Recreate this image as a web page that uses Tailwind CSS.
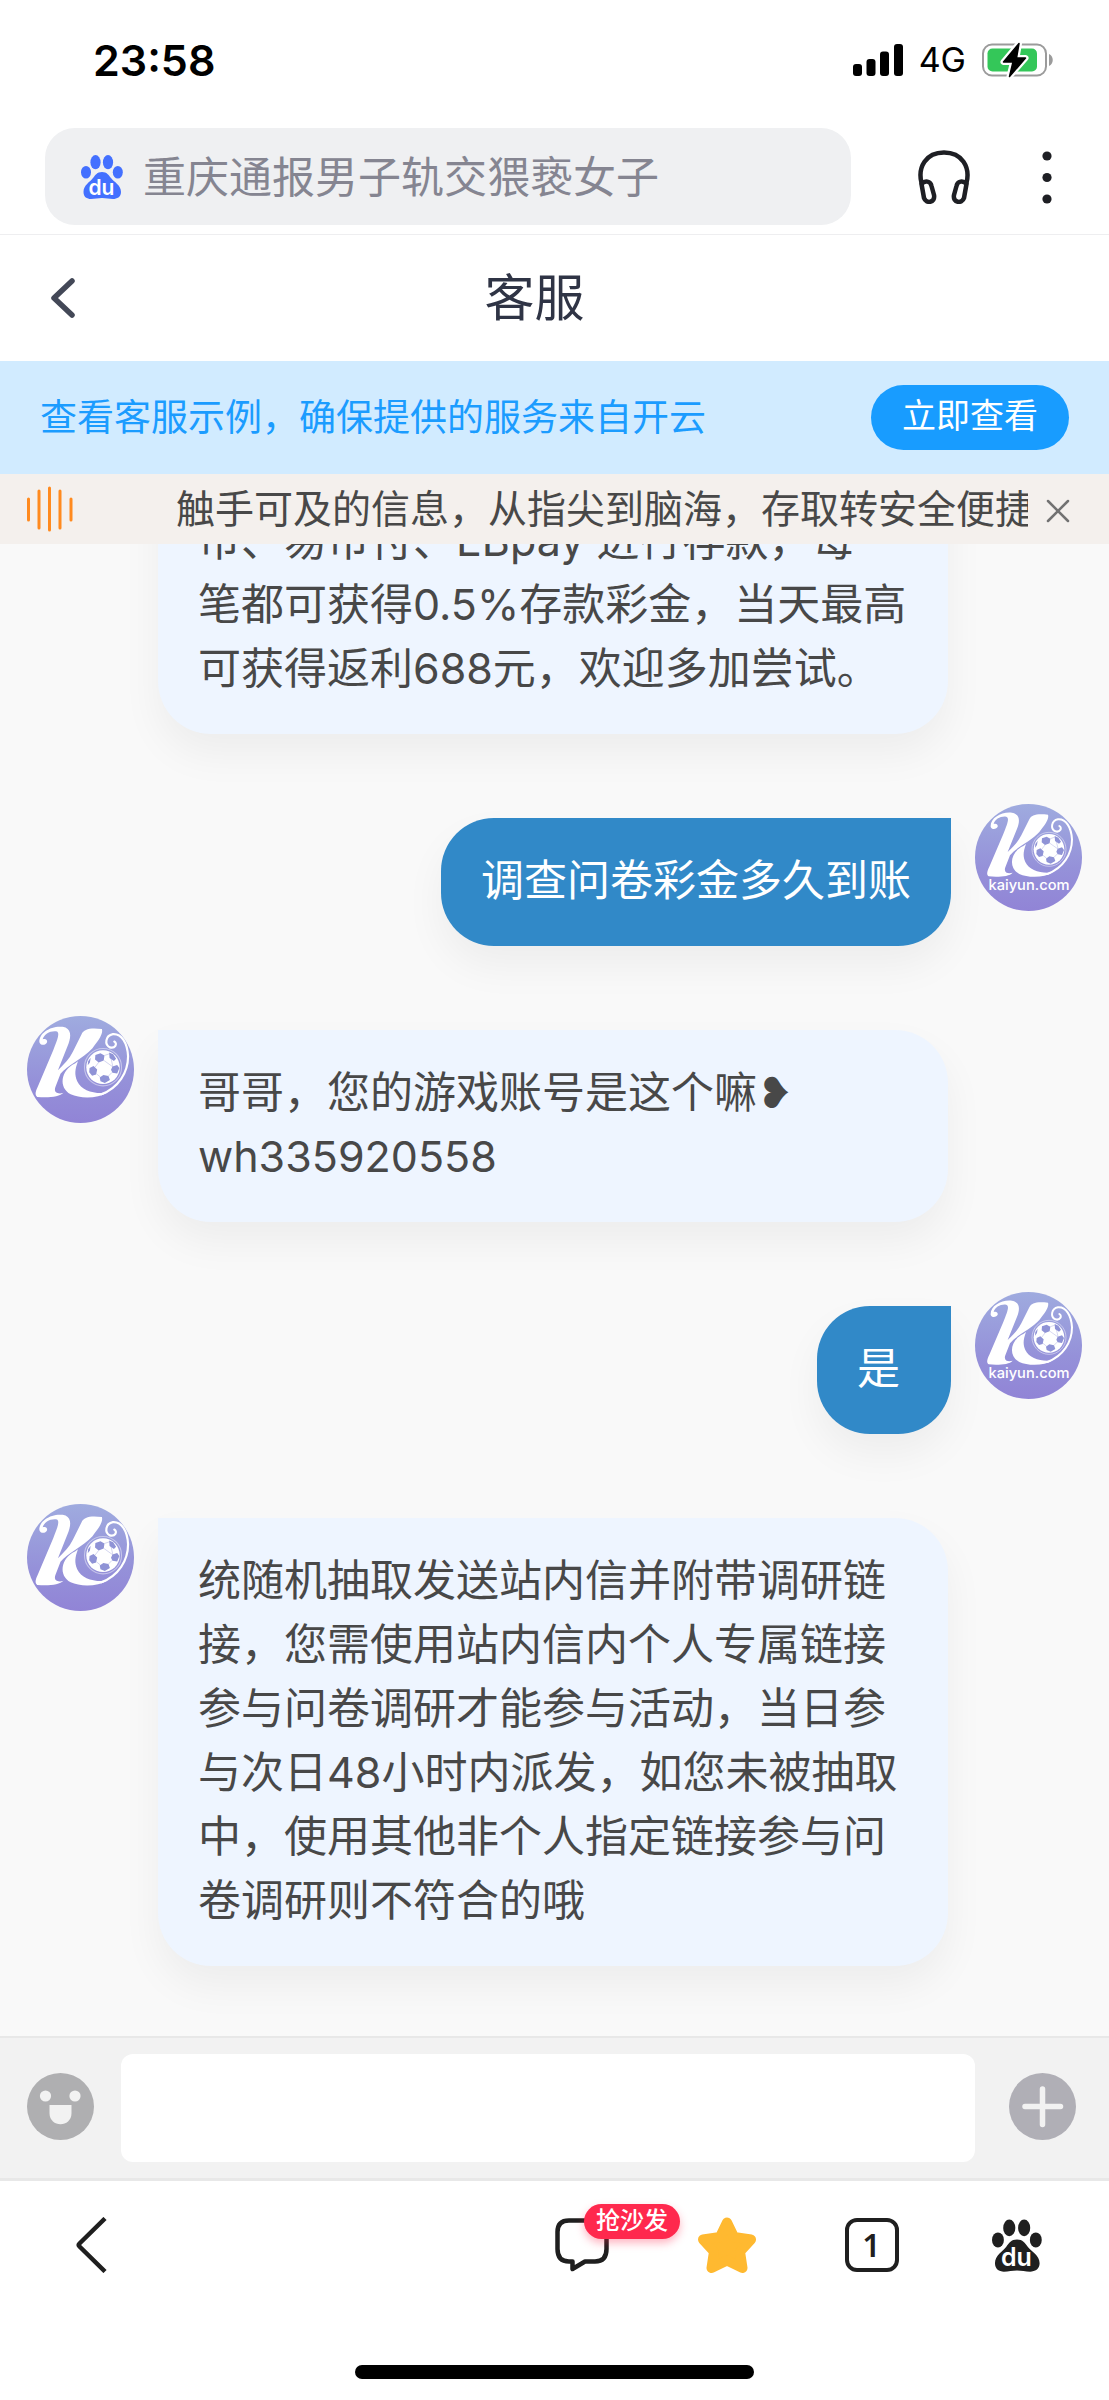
<!DOCTYPE html>
<html lang="zh-CN">
<head>
<meta charset="utf-8">
<meta name="viewport" content="width=device-width, initial-scale=1">
<title>客服</title>
<script src="https://cdn.jsdelivr.net/npm/@tailwindcss/browser@4"></script>
</head>
<body class="h-screen flex flex-col bg-white overflow-hidden font-[Inter,'Noto_Sans_CJK_SC',sans-serif] text-[#484848]">

<svg class="absolute w-0 h-0" aria-hidden="true">
  <defs>
    <linearGradient id="disc" x1="0" y1="0" x2="0" y2="1">
      <stop offset="0" stop-color="#9fabdf"/>
      <stop offset="0.6" stop-color="#9591d9"/>
      <stop offset="1" stop-color="#9184d6"/>
    </linearGradient>
    <g id="kmark">
      <path fill="#fff" d="M92 108C90 82 125 62 156 66C180 70 180 92 172 112L143 184C160 168 174 154 184 134L208 86C214 72 232 68 264 72C268 84 256 102 238 124C212 152 166 172 150 194L136 230C130 246 144 250 158 246C148 258 112 260 86 257C78 252 82 240 88 228L130 130C142 100 150 80 138 78C122 76 104 86 101 100C110 96 116 104 112 110C106 118 94 116 92 108Z"/>
      <path fill="#fff" d="M190 166C150 184 144 232 178 250C204 262 252 262 280 245C244 250 208 240 196 214C188 196 190 182 198 160Z"/>
      <path fill="none" stroke="#fff" stroke-width="6" stroke-linecap="round" d="M262 250C310 232 336 190 336 146C334 110 318 84 294 86C274 90 270 114 286 122C300 126 308 112 298 106"/>
      <circle cx="267" cy="176" r="51" fill="none" stroke="#fff" stroke-opacity=".45" stroke-width="3"/>
      <circle cx="267" cy="176" r="46" fill="#fff"/>
      <g fill="#8f93d6">
        <path d="M246 143l14-5 11 6-2 14-14 5-10-8zM284 136l11 5 8 12-6 6-12-8zM293 174l13-4 6 8-6 15-13-2-4-8zM268 197l14 3 4 11-14 8-12-5-2-10zM230 178l11-5 10 9-3 14-11 3-8-9zM226 160l7-10-2 13-6 8z"/>
      </g>
      <g fill="none" stroke="#8f93d6" stroke-width="1.500" stroke-opacity=".7">
        <path d="M255 163l-10 13M270 158l24 17M271 144l15-5M249 194l11 9M282 200l10-10M289 152l5 22"/>
      </g>
    </g>
    <symbol id="avatar-user" viewBox="45 40 321 321">
      <circle cx="205.500" cy="200.500" r="160.500" fill="url(#disc)"/>
      <use href="#kmark"/>
      <text x="207" y="297" text-anchor="middle" font-family="Inter" font-weight="500" font-size="44" fill="#fff">kaiyun.com</text>
    </symbol>
    <symbol id="avatar-agent" viewBox="45 40 321 321">
      <circle cx="205.500" cy="200.500" r="160.500" fill="url(#disc)"/>
      <use href="#kmark" transform="matrix(1.09 0 0 1.1 -18 0)"/>
    </symbol>
    <symbol id="paw" viewBox="0 0 42 44">
      <g fill="currentColor">
        <ellipse cx="5" cy="17.300" rx="5" ry="6.300"/>
        <ellipse cx="14.500" cy="7.200" rx="5.100" ry="7.100"/>
        <ellipse cx="27" cy="7.200" rx="5.100" ry="7.100"/>
        <ellipse cx="36.800" cy="17.300" rx="5" ry="6.300"/>
        <path d="M21 17C16 17 14.500 20 12 23C9 27 2.500 30 2.500 37C2.500 42 6 44 10 44C14 44 17 43 21 43C25 43 28 44 32 44C36 44 40 42 40 37C40 30 33 27 30 23C27.500 20 26 17 21 17Z"/>
      </g>
      <text x="20.500" y="39.500" text-anchor="middle" font-family="Inter" font-weight="600" font-size="21" fill="#fff">du</text>
    </symbol>
  </defs>
</svg>

<!-- Status bar -->
<div class="shrink-0 h-32 pl-[93px] pr-14 flex items-center justify-between text-black">
  <time class="text-[43px] leading-none font-semibold -mt-2">23:58</time>
  <div class="flex items-center gap-4 -mt-2">
    <svg class="w-[50px] h-8" viewBox="0 0 50 32" fill="#000" aria-label="信号">
      <rect x="0" y="20" width="9" height="12" rx="3"/><rect x="13.500" y="15" width="9" height="17" rx="3"/><rect x="27" y="7.500" width="9" height="24.500" rx="3"/><rect x="41" y="0" width="9" height="32" rx="3"/>
    </svg>
    <span class="text-[34px] leading-none">4G</span>
    <svg class="w-[71px] h-9" viewBox="0 -1.500 71 36" aria-label="充电中">
      <rect x="1" y="1" width="63" height="31" rx="9" fill="none" stroke="#9b9b9b" stroke-width="2"/>
      <rect x="5.500" y="5" width="49.500" height="23" rx="5" fill="#34c759"/>
      <path d="M67 10.500C72 12.500 72 20.500 67 22.500Z" fill="#9b9b9b"/>
      <path d="M37 0L21.500 18.500H31L27.500 33L43.500 14.500H34.500Z" fill="#000" stroke="#fff" stroke-width="6" stroke-linejoin="round"/>
      <path d="M37 0L21.500 18.500H31L27.500 33L43.500 14.500H34.500Z" fill="#000" stroke="#000" stroke-width="1.500" stroke-linejoin="round"/>
    </svg>
  </div>
</div>

<!-- Browser address bar -->
<div class="shrink-0 h-[107px] pl-[45px] pr-[52px] flex items-start border-b border-[#eeeef0]">
  <label class="flex-1 h-[97px] pl-9 pr-6 flex items-center gap-5 rounded-[30px] bg-[#eff0f2]">
    <svg class="shrink-0 w-[42px] h-11 text-[#4370ff]" aria-hidden="true"><use href="#paw"/></svg>
    <input type="search" aria-label="搜索" placeholder="重庆通报男子轨交猥亵女子" class="min-w-0 flex-1 bg-transparent text-[43px] leading-[64px] placeholder:text-[#858591] outline-none">
  </label>
  <button aria-label="听网页" class="h-[97px] ml-[62px] px-1">
    <svg class="w-[54px] h-[54px]" viewBox="0 0 54 54" fill="none" stroke="#1e1f24" stroke-width="4.500" stroke-linecap="round" stroke-linejoin="round">
      <path d="M4.500 33C0.500 17 9 2.500 27 2.500C45 2.500 53.500 17 49.500 33"/>
      <path d="M4.500 34C8 30 13.500 31 14.500 36L17 45C18.500 53 9 54 7 48Z"/>
      <path d="M49.500 34C46 30 40.500 31 39.500 36L37 45C35.500 53 45 54 47 48Z"/>
    </svg>
  </button>
  <button aria-label="更多" class="h-[97px] ml-[62px]">
    <svg class="w-5 h-[54px]" viewBox="0 0 20 54" fill="#1e1f24"><circle cx="10" cy="6" r="4.600"/><circle cx="10" cy="27.500" r="4.600"/><circle cx="10" cy="49" r="4.600"/></svg>
  </button>
</div>

<!-- Page title -->
<header class="shrink-0 h-[126px] px-[27px] grid grid-cols-[107px_1fr_147px] items-center">
  <button aria-label="返回" class="pl-6 justify-self-start">
    <svg class="w-6 h-10" viewBox="0 0 24 40" fill="none" stroke="#434857" stroke-width="5.500" stroke-linecap="round" stroke-linejoin="round"><path d="M21 3L3 20L21 37"/></svg>
  </button>
  <h1 class="text-center text-[50px] leading-[64px] text-[#2f3445]">客服</h1>
</header>

<!-- Example banner -->
<section class="shrink-0 h-[113px] px-10 flex items-center justify-between bg-[#d1ebff]">
  <p class="text-[37px] leading-[64px] text-[#1b9cff] whitespace-nowrap">查看客服示例，确保提供的服务来自开云</p>
  <button class="w-[198px] h-[65px] rounded-full bg-[#189cff] text-white text-[34px] leading-[60px] pb-1">立即查看</button>
</section>

<!-- Scrolling notice -->
<section class="shrink-0 h-[70px] pl-[27px] pr-[39px] flex items-center bg-[#f4f0ed]">
  <svg class="shrink-0 w-[46px] h-[46px]" viewBox="0 0 46 46" fill="none" stroke="#ff8a1f" stroke-width="3" stroke-linecap="round" aria-hidden="true">
    <path d="M1.500 13V34M12 5V42M22.500 2V44M33 5V42M44 13V34"/>
  </svg>
  <p class="min-w-0 flex-1 ml-[103px] overflow-hidden whitespace-nowrap text-[39px] leading-[64px]">触手可及的信息，从指尖到脑海，存取转安全便捷</p>
  <button aria-label="关闭" class="shrink-0 ml-[18px] pt-1">
    <svg class="w-6 h-6" viewBox="0 0 24 24" fill="none" stroke="#727272" stroke-width="2.500" stroke-linecap="round"><path d="M2 2L22 22M22 2L2 22"/></svg>
  </button>
</section>

<!-- Conversation -->
<main class="min-h-0 flex-1 flex flex-col-reverse overflow-y-auto [scrollbar-width:none] bg-[#f9f9f9] text-[43px] leading-[64px]">
  <div class="px-[27px] pb-[70px] flex flex-col gap-[70px]">
    <article class="ml-[131px] mr-[134px] px-10 pt-[30px] pb-[34px] rounded-b-[53px] bg-[#eef5ff] shadow-[0_20px_40px_rgba(0,0,0,0.05)]">
      <p>币、易币付、EBpay 进行存款，每<br>笔都可获得0.5%存款彩金，当天最高可获得返利688元，欢迎多加尝试。</p>
    </article>

    <article class="flex items-start justify-end gap-6">
      <p class="mt-3.5 min-w-[134px] px-10 pt-[30px] pb-[34px] rounded-[53px] rounded-tr-none bg-[#3189c8] text-white shadow-[0_20px_40px_rgba(0,0,0,0.05)]">调查问卷彩金多久到账</p>
      <svg class="shrink-0 w-[107px] h-[107px]" role="img" aria-label="用户头像"><use href="#avatar-user"/></svg>
    </article>

    <article class="flex items-start gap-6">
      <svg class="shrink-0 w-[107px] h-[107px]" role="img" aria-label="客服头像"><use href="#avatar-agent"/></svg>
      <p class="mt-3.5 mr-[134px] flex-1 px-10 pt-[30px] pb-[34px] rounded-[53px] rounded-tl-none bg-[#eef5ff] shadow-[0_20px_40px_rgba(0,0,0,0.05)]">哥哥，您的游戏账号是这个嘛❥<br>wh335920558</p>
    </article>

    <article class="flex items-start justify-end gap-6">
      <p class="mt-3.5 min-w-[134px] px-10 pt-[30px] pb-[34px] rounded-[53px] rounded-tr-none bg-[#3189c8] text-white shadow-[0_20px_40px_rgba(0,0,0,0.05)]">是</p>
      <svg class="shrink-0 w-[107px] h-[107px]" role="img" aria-label="用户头像"><use href="#avatar-user"/></svg>
    </article>

    <article class="flex items-start gap-6">
      <svg class="shrink-0 w-[107px] h-[107px]" role="img" aria-label="客服头像"><use href="#avatar-agent"/></svg>
      <p class="mt-3.5 mr-[134px] flex-1 px-10 pt-[30px] pb-[34px] rounded-[53px] rounded-tl-none bg-[#eef5ff] shadow-[0_20px_40px_rgba(0,0,0,0.05)]">统随机抽取发送站内信并附带调研链接，您需使用站内信内个人专属链接参与问卷调研才能参与活动，当日参与次日48小时内派发，如您未被抽取中，使用其他非个人指定链接参与问卷调研则不符合的哦</p>
    </article>
  </div>
</main>

<!-- Message composer -->
<form class="shrink-0 py-4 pl-[27px] pr-[33px] flex items-center bg-[#f2f2f2] border-t-2 border-b-3 border-[#e8e8e8]">
  <button type="button" aria-label="表情" class="-mt-1">
    <svg class="w-[67px] h-[67px]" viewBox="0 0 67 67" fill="#f2f2f2"><circle cx="33.500" cy="33.500" r="33.500" fill="#afafb1"/><circle cx="18.500" cy="23" r="5.600"/><circle cx="48" cy="23" r="5.600"/><path d="M22.500 32H44.500V40C44.500 55 22.500 55 22.500 40Z"/></svg>
  </button>
  <input type="text" aria-label="输入消息" class="min-w-0 flex-1 h-[108px] ml-[27px] mr-[34px] px-6 rounded-xl bg-white text-[43px] outline-none">
  <button type="button" aria-label="添加" class="-mt-1">
    <svg class="w-[67px] h-[67px]" viewBox="0 0 67 67"><circle cx="33.500" cy="33.500" r="33.500" fill="#b0afb6"/><path d="M33.500 16V51.500M16 33.500H51.500" stroke="#f2f2f2" stroke-width="5.500" stroke-linecap="round"/></svg>
  </button>
</form>

<!-- Browser toolbar -->
<nav class="shrink-0 h-32 pl-[18px] pr-5 flex items-center justify-between">
  <button aria-label="后退" class="w-[145px] flex justify-center">
    <svg class="w-8 h-14" viewBox="0 0 32 56" fill="none" stroke="#1f1f1f" stroke-width="4.500" stroke-linejoin="round"><path d="M30 1.500L4.500 26.500Q3 28 4.500 29.500L30 54.500"/></svg>
  </button>
  <div class="flex items-center">
    <button class="relative w-[145px] flex justify-center">
      <svg class="w-[54px] h-[54px]" viewBox="0 0 54 54" fill="none" stroke="#1f1f1f" stroke-width="4.500" stroke-linejoin="round" aria-hidden="true"><path d="M14 2.500H40Q51.500 2.500 51.500 14V31Q51.500 43.500 40 43.500H30L17.500 51V43.500H14Q2.500 43.500 2.500 31V14Q2.500 2.500 14 2.500Z"/></svg>
      <span class="absolute left-[75px] -top-3.5 w-24 h-[35px] rounded-full bg-[#ff284d] text-white text-2xl leading-[33px] font-medium shadow-[0_4px_8px_rgba(255,40,77,0.35)]">抢沙发</span>
    </button>
    <button aria-label="收藏" class="w-[145px] flex justify-center">
      <svg class="w-[58px] h-14" viewBox="0 0 58 56" fill="#ffb930" stroke="#ffb930" stroke-width="10" stroke-linejoin="round"><path d="M29 5.500L36 20L53 22.500L42 34.500L44.500 51L29 43.500L13.500 51L16 34.500L5 22.500L22 20Z"/></svg>
    </button>
    <button aria-label="标签页 1" class="w-[145px] flex justify-center">
      <span class="w-[54px] h-[54px] flex items-center justify-center rounded-xl border-4 border-[#1f1f1f] text-[#1f1f1f] text-[32px] leading-none font-semibold font-['Noto_Sans',sans-serif]">1</span>
    </button>
    <button aria-label="百度首页" class="w-[145px] flex justify-center">
      <svg class="w-[50px] h-[53px] text-[#1f1f1f]"><use href="#paw"/></svg>
    </button>
  </div>
</nav>
<div class="shrink-0 h-[91px] flex items-end justify-center pb-[21px]">
  <div class="w-[36%] h-3.5 rounded-full bg-black"></div>
</div>

</body>
</html>
